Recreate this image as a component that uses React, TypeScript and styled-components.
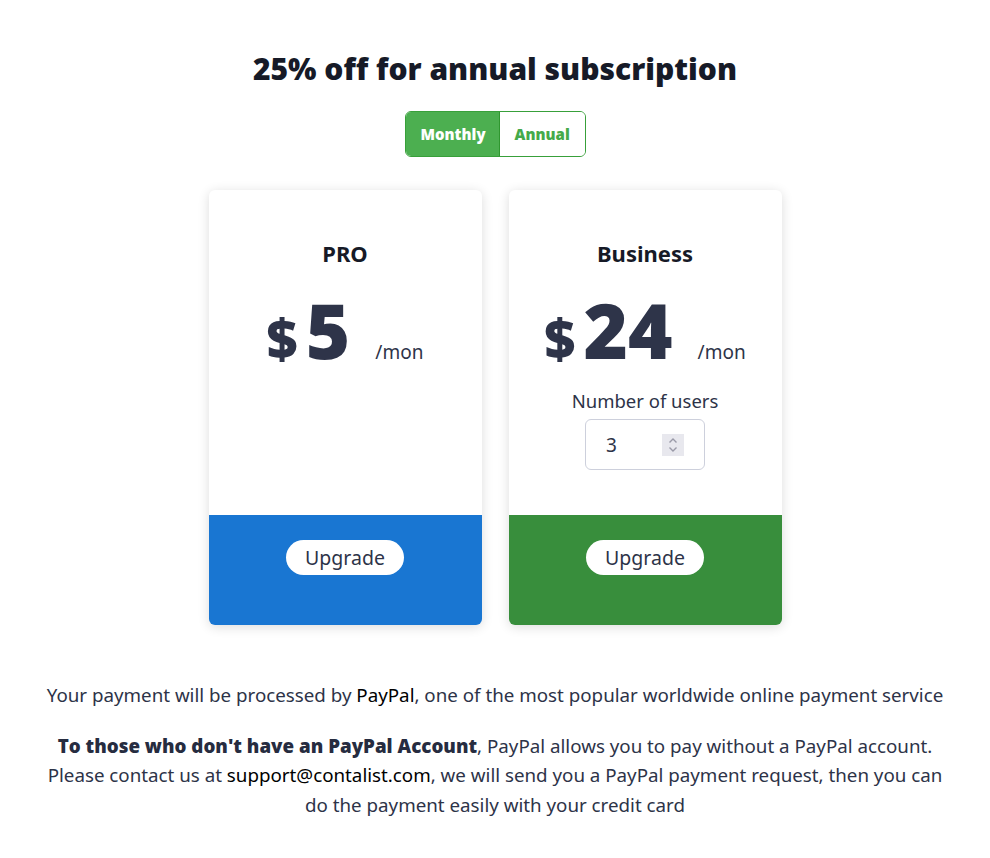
import styled, { createGlobalStyle } from 'styled-components'

const GlobalStyle = createGlobalStyle`
  html, body {
    margin: 0;
    padding: 0;
    background: #ffffff;
  }
  body {
    font-family: "Noto Sans", "Open Sans", sans-serif;
    color: #2d3348;
  }
  * {
    box-sizing: border-box;
  }
`

const Page = styled.div`
  width: 990px;
  display: flex;
  flex-direction: column;
  align-items: center;
  padding-top: 49px;
`

const Title = styled.h1`
  margin: 0;
  font-family: "Open Sans", sans-serif;
  font-weight: 800;
  font-size: 30px;
  line-height: 40px;
  color: #161a27;
`

const Toggle = styled.div`
  display: flex;
  margin-top: 22px;
  border: 1px solid #38a03a;
  border-radius: 6px;
  overflow: hidden;
  height: 46px;
`

const ToggleButton = styled.button<{ active?: boolean }>`
  border: none;
  margin: 0;
  padding: 0 15px;
  font-family: "Open Sans", sans-serif;
  font-weight: 800;
  font-size: 15px;
  cursor: pointer;
  background: ${({ active }) => (active ? '#4caf50' : '#ffffff')};
  color: ${({ active }) => (active ? '#ffffff' : '#45aa4a')};
  border-right: ${({ active }) => (active ? '1px solid #2f972f' : 'none')};
  width: ${({ active }) => (active ? '94px' : '85px')};
`

const Cards = styled.div`
  display: flex;
  gap: 27px;
  margin-top: 33px;
`

const Card = styled.div`
  width: 273px;
  height: 435px;
  display: flex;
  flex-direction: column;
  border-radius: 6px;
  overflow: hidden;
  background: #ffffff;
  box-shadow: 0 2px 12px rgba(0, 0, 0, 0.14);
`

const CardBody = styled.div`
  flex: 1;
  display: flex;
  flex-direction: column;
  align-items: center;
  padding-top: 48px;
`

const PlanName = styled.div`
  font-weight: 700;
  font-size: 22px;
  line-height: 30px;
  color: #161a27;
`

const PriceRow = styled.div`
  display: flex;
  align-items: baseline;
  margin-top: 22px;
  color: #2e3449;
`

const Currency = styled.span`
  font-family: "Open Sans", sans-serif;
  font-weight: 800;
  font-size: 54px;
  line-height: 80px;
  margin-right: 8px;
`

const Amount = styled.span`
  font-family: "Open Sans", sans-serif;
  font-weight: 800;
  font-size: 76px;
  line-height: 80px;
`

const Per = styled.span`
  font-size: 19px;
  margin-left: 25px;
`

const UsersLabel = styled.div`
  margin-top: 10px;
  font-size: 18.5px;
  line-height: 26px;
`

const NumberBox = styled.div`
  margin-top: 5px;
  width: 120px;
  height: 51px;
  border: 1px solid #cdd0dc;
  border-radius: 6px;
  display: flex;
  align-items: center;
  justify-content: space-between;
  padding: 0 20px 0 20px;
  font-size: 19px;
`

const Spinner = styled.div`
  width: 22px;
  height: 22px;
  background: #e8e8ee;
  display: flex;
  align-items: center;
  justify-content: center;
`

const CardFooter = styled.div<{ color: string }>`
  height: 110px;
  background: ${({ color }) => color};
  display: flex;
  justify-content: center;
  padding-top: 25px;
`

const UpgradeButton = styled.button`
  height: 35px;
  padding: 0 19px;
  border: none;
  border-radius: 18px;
  background: #ffffff;
  color: #2d3348;
  font-family: "Noto Sans", sans-serif;
  font-size: 19.5px;
  cursor: pointer;
`

const Note = styled.p`
  margin: 0;
  text-align: center;
  font-size: 18.75px;
  line-height: 29.5px;
  max-width: 930px;
`

const FirstNote = styled(Note)`
  margin-top: 55px;
`

const SecondNote = styled(Note)`
  margin-top: 21px;
`

const Dark = styled.span`
  color: #000000;
`

const Strong = styled.strong`
  font-family: "Open Sans", sans-serif;
  font-weight: 800;
  color: #262c40;
`

const SpinIcon = () => (
  <svg width="12" height="18" viewBox="0 0 12 18" fill="none" stroke="#9a9aa8" strokeWidth="1.4">
    <path d="M2.5 6.5 6 3l3.5 3.5" />
    <path d="M2.5 11.5 6 15l3.5-3.5" />
  </svg>
)

export default function App() {
  return (
    <>
      <GlobalStyle />
      <Page>
        <Title>25% off for annual subscription</Title>
        <Toggle>
          <ToggleButton active>Monthly</ToggleButton>
          <ToggleButton>Annual</ToggleButton>
        </Toggle>
        <Cards>
          <Card>
            <CardBody>
              <PlanName>PRO</PlanName>
              <PriceRow>
                <Currency>$</Currency>
                <Amount>5</Amount>
                <Per>/mon</Per>
              </PriceRow>
            </CardBody>
            <CardFooter color="#1976d2">
              <UpgradeButton>Upgrade</UpgradeButton>
            </CardFooter>
          </Card>
          <Card>
            <CardBody>
              <PlanName>Business</PlanName>
              <PriceRow>
                <Currency>$</Currency>
                <Amount>24</Amount>
                <Per>/mon</Per>
              </PriceRow>
              <UsersLabel>Number of users</UsersLabel>
              <NumberBox>
                <span>3</span>
                <Spinner>
                  <SpinIcon />
                </Spinner>
              </NumberBox>
            </CardBody>
            <CardFooter color="#388e3c">
              <UpgradeButton>Upgrade</UpgradeButton>
            </CardFooter>
          </Card>
        </Cards>
        <FirstNote>
          Your payment will be processed by <Dark>PayPal</Dark>, one of the most popular worldwide online payment service
        </FirstNote>
        <SecondNote>
          <Strong>To those who don't have an PayPal Account</Strong>, PayPal allows you to pay without a PayPal account.
          <br />
          Please contact us at <Dark>support@contalist.com</Dark>, we will send you a PayPal payment request, then you can
          <br />
          do the payment easily with your credit card
        </SecondNote>
      </Page>
    </>
  )
}
